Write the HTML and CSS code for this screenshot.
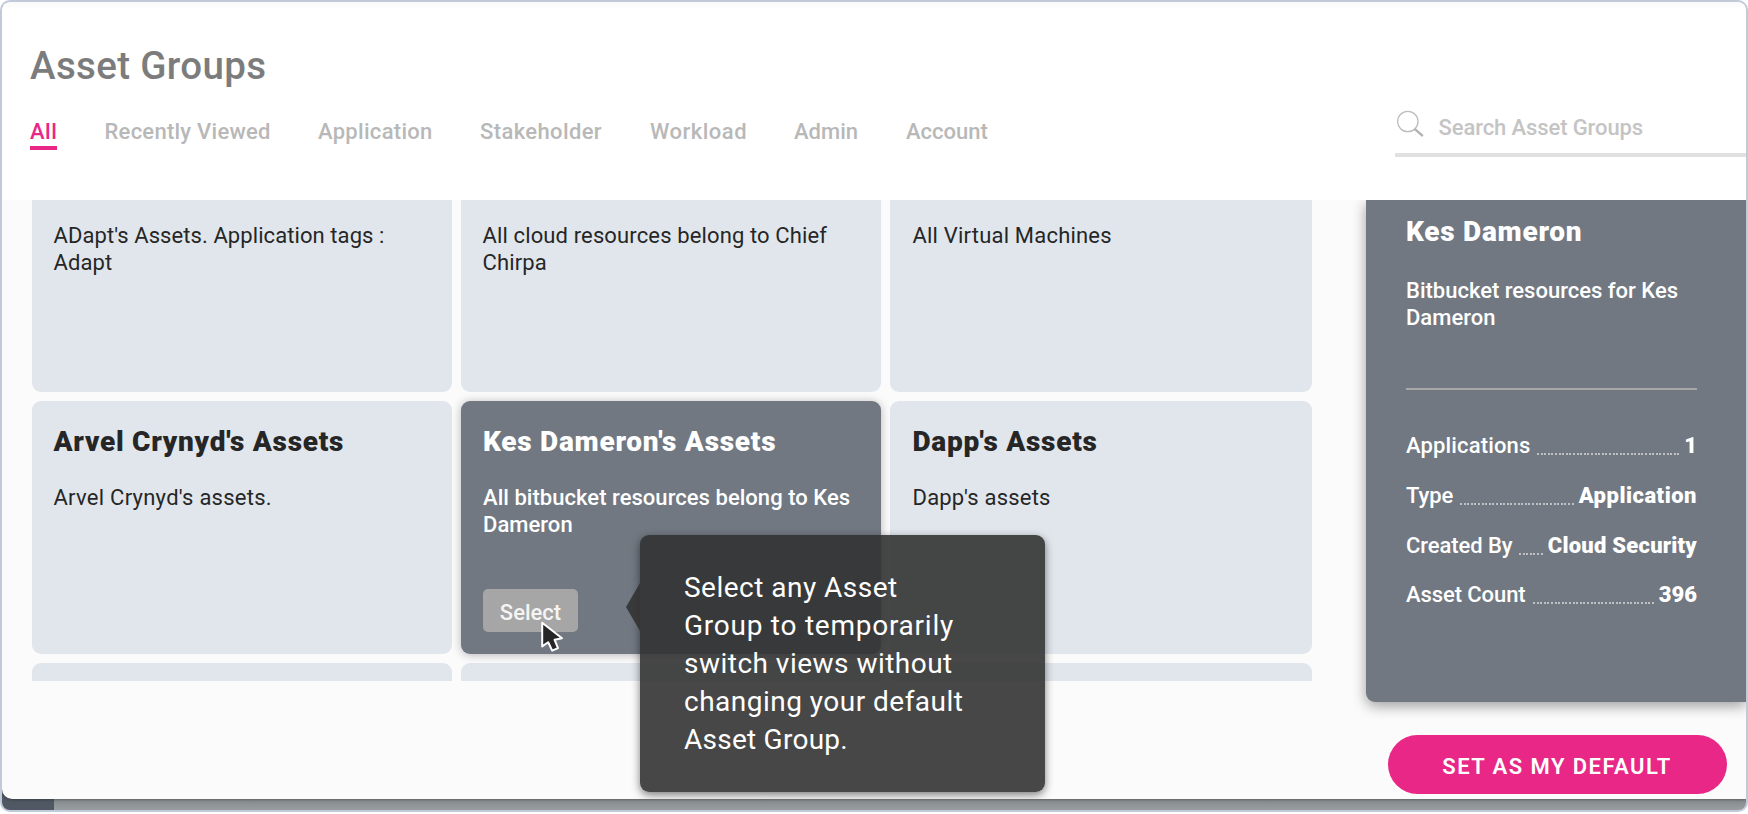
FILE: index.html
```
<!DOCTYPE html>
<html lang="en">
<head>
<meta charset="utf-8">
<title>Asset Groups</title>
<link rel="stylesheet" href="styles.css">
</head>
<body>
<div class="frame">
  <div class="sheet">
    <header class="header">
      <div>
        <h1 class="title">Asset Groups</h1>
        <nav class="tabs">
          <a class="tab tab-active">All</a>
          <a class="tab tab-recent">Recently Viewed</a>
          <a class="tab tab-app">Application</a>
          <a class="tab tab-stake">Stakeholder</a>
          <a class="tab tab-work">Workload</a>
          <a class="tab">Admin</a>
          <a class="tab">Account</a>
        </nav>
      </div>
      <div class="search">
        <svg class="search-icon" width="28" height="28" viewBox="0 0 28 28"><circle cx="10.8" cy="11.5" r="10.2" fill="none" stroke="#bdbdbd" stroke-width="1.3"/><path d="M17.6 18.8L25.8 26" stroke="#b3b3b3" stroke-width="2.4"/></svg>
        <span class="search-text">Search Asset Groups</span>
      </div>
    </header>
    <main class="content">
      <div class="grid">
        <section class="card card-top"><p class="desc">ADapt's Assets. Application tags :<br>Adapt</p></section>
        <section class="card card-top"><p class="desc desc-wide">All cloud resources belong to Chief<br>Chirpa</p></section>
        <section class="card card-top card-last"><p class="desc desc-vm">All Virtual Machines</p></section>
        <section class="card"><h2 class="name">Arvel Crynyd's Assets</h2><p class="desc desc-arvel">Arvel Crynyd's assets.</p></section>
        <section class="card card-selected">
          <h2 class="name">Kes Dameron's Assets</h2>
          <p class="desc">All bitbucket resources belong to Kes<br>Dameron</p>
          <button class="select">Select</button>
          <svg class="cursor" width="24" height="32" viewBox="0 0 24 32"><path d="M2.2 1.8V25.4L8.2 21.2L12.2 29.6L18 27.2L14.6 18.8L22 17.2Z" fill="#262626" stroke="#fff" stroke-width="2" stroke-linejoin="round"/></svg>
          <div class="tooltip">Select any Asset<br><span class="tip-wide">Group to temporarily</span><br>switch views without<br>changing your default<br><span class="tip-tight">Asset Group.</span></div>
        </section>
        <section class="card card-last"><h2 class="name">Dapp's Assets</h2><p class="desc desc-vm">Dapp's assets</p></section>
        <section class="card card-bottom"></section>
        <section class="card card-bottom"></section>
        <section class="card card-bottom"></section>
      </div>
      <aside class="side">
        <div class="panel">
          <h2 class="name panel-name">Kes Dameron</h2>
          <p class="panel-desc">Bitbucket resources for Kes<br>Dameron</p>
          <dl class="facts">
            <div class="fact"><dt>Applications</dt><i class="dots"></i><dd class="num">1</dd></div>
            <div class="fact"><dt class="tight">Type</dt><i class="dots"></i><dd class="wide">Application</dd></div>
            <div class="fact"><dt class="tight">Created By</dt><i class="dots"></i><dd>Cloud Security</dd></div>
            <div class="fact"><dt class="tight">Asset Count</dt><i class="dots"></i><dd class="num">396</dd></div>
          </dl>
        </div>
        <button class="default">SET AS MY DEFAULT</button>
      </aside>
    </main>
  </div>
</div>
</body>
</html>
```
FILE: styles.css
```
* { box-sizing: border-box; }
body { margin: 0; background: #fff; font-family: Roboto, "Liberation Sans", sans-serif; }
h1, h2, p, dl, dd { margin: 0; }
button { border: 0; font-family: inherit; }

.frame {
  height: 812px;
  border: 2px solid #c0cad8;
  border-radius: 10px;
  overflow: hidden;
  background: linear-gradient(90deg, #4f5863 52px, transparent 52px), linear-gradient(#838889 796px, #989da1 808px);
}
.sheet {
  height: 797px;
  border-radius: 0 0 0 10px;
  overflow: hidden;
  background: #fbfbfb;
  box-shadow: 0 1px 3px rgba(0, 0, 0, .3);
}
.header {
  height: 198px;
  padding: 40px 0 0 28px;
  display: flex;
  justify-content: space-between;
  background: linear-gradient(#fafafa, #fff 8px);
}
.title { font-size: 38.5px; line-height: 48px; font-weight: 500; letter-spacing: .35px; color: #7c7c7c; }
.tabs { display: grid; grid-template-columns: 74.5px 213.5px 162px 170px 144px 112px auto; margin-top: 28px; }
.tab { justify-self: start; font-size: 22px; line-height: 28px; font-weight: 500; color: #b8b8b8; white-space: nowrap; }
.tab-active { color: #e82786; letter-spacing: .5px; border-bottom: 4px solid #e82786; height: 32px; }
.tab-recent { letter-spacing: .25px; }
.tab-app { letter-spacing: .3px; }
.tab-stake { letter-spacing: .38px; }
.tab-work { letter-spacing: .49px; }

.search {
  width: 351px;
  height: 50px;
  margin-top: 65px;
  padding: 3px 0 0 2px;
  border-bottom: 4px solid #e1e1e1;
  display: flex;
  gap: 13.5px;
}
.search-text { margin-top: 4px; font-size: 22px; line-height: 28px; font-weight: 500; letter-spacing: -.1px; color: #c4c4c4; }

.content { height: 599px; display: flex; justify-content: space-between; padding-left: 30px; }
.grid {
  display: grid;
  grid-template-columns: 420px 420px 422px;
  grid-template-rows: 192px 253px 18px;
  gap: 9px;
}
.card { position: relative; border-radius: 9px; background: #e1e6ed; color: #262626; padding: 24px 0 0 21.5px; }
.card-top { border-radius: 0 0 9px 9px; padding-top: 21.5px; }
.card-last { padding-left: 22.5px; }
.card-bottom { border-radius: 9px 9px 0 0; padding: 0; }
.card-selected { z-index: 1; padding-left: 22px; background: #717881; color: #fff; box-shadow: 0 1px 10px rgba(0, 0, 0, .28); }
.card-selected .desc { font-weight: 500; letter-spacing: .04px; }
.name { font-size: 28px; line-height: 34px; font-weight: 900; letter-spacing: .74px; white-space: nowrap; }
.desc { font-size: 22px; line-height: 27px; letter-spacing: .08px; white-space: nowrap; }
.name + .desc { margin-top: 25px; }
.desc-wide { letter-spacing: .13px; }
.desc-vm { letter-spacing: .2px; }
.desc-arvel { letter-spacing: .26px; }
.select {
  display: block;
  width: 95px;
  height: 43px;
  margin-top: 51px;
  padding: 4px 0 0;
  border-radius: 5px;
  background: #a6a6a6;
  color: #f4f4f4;
  font-size: 22px;
  font-weight: 500;
}
.cursor { position: absolute; left: 79px; top: 220px; }
.tooltip {
  position: absolute;
  left: 179px;
  top: 134px;
  width: 404.5px;
  height: 257px;
  padding: 34px 0 0 44px;
  border-radius: 9px;
  background: rgba(49, 49, 49, .894);
  box-shadow: 0 3px 9px rgba(0, 0, 0, .5);
  font-size: 28px;
  line-height: 38px;
  letter-spacing: .48px;
  white-space: nowrap;
}
.tooltip::before {
  content: "";
  position: absolute;
  left: -14px;
  top: 48px;
  width: 14px;
  height: 48px;
  background: rgba(49, 49, 49, .894);
  clip-path: polygon(100% 0, 100% 100%, 0 50%);
}
.tip-wide { letter-spacing: .75px; }
.tip-tight { letter-spacing: .25px; }

.side { width: 380px; display: flex; flex-direction: column; align-items: flex-start; clip-path: inset(0 0 0 -30px); }
.panel {
  width: 380px;
  height: 502px;
  padding: 14.5px 49px 0 40px;
  border-radius: 0 0 0 9px;
  background: #717881;
  box-shadow: 0 4px 14px rgba(0, 0, 0, .38);
  color: #fff;
}
.panel-desc { margin-top: 28.5px; padding-bottom: 57px; border-bottom: 2px solid #a8a8a8; font-size: 22px; line-height: 27px; font-weight: 500; letter-spacing: 0; white-space: nowrap; }
.facts { margin-top: 41px; font-size: 22px; line-height: 30px; }
.fact { display: flex; align-items: flex-start; margin-bottom: 20px; }
.fact:nth-child(3) { margin-bottom: 19px; }
.fact dt { font-weight: 500; letter-spacing: .15px; }
.fact dd { font-weight: 900; letter-spacing: .22px; }
.fact .tight { letter-spacing: -.08px; }
.fact .wide { letter-spacing: .5px; }
.fact .num { letter-spacing: 0; }
.dots {
  flex: 1;
  height: 2px;
  margin: 22px 5px 0 7px;
  background: repeating-linear-gradient(90deg, #bfc1c4 0 2px, transparent 2px 3.6px);
}
.default {
  width: 339px;
  height: 59px;
  margin: 32.5px 0 0 21.5px;
  padding: 4px 0 0;
  border-radius: 30px;
  background: #e82786;
  color: #fff;
  font-size: 22px;
  font-weight: 600;
  letter-spacing: 1.45px;
}
```
